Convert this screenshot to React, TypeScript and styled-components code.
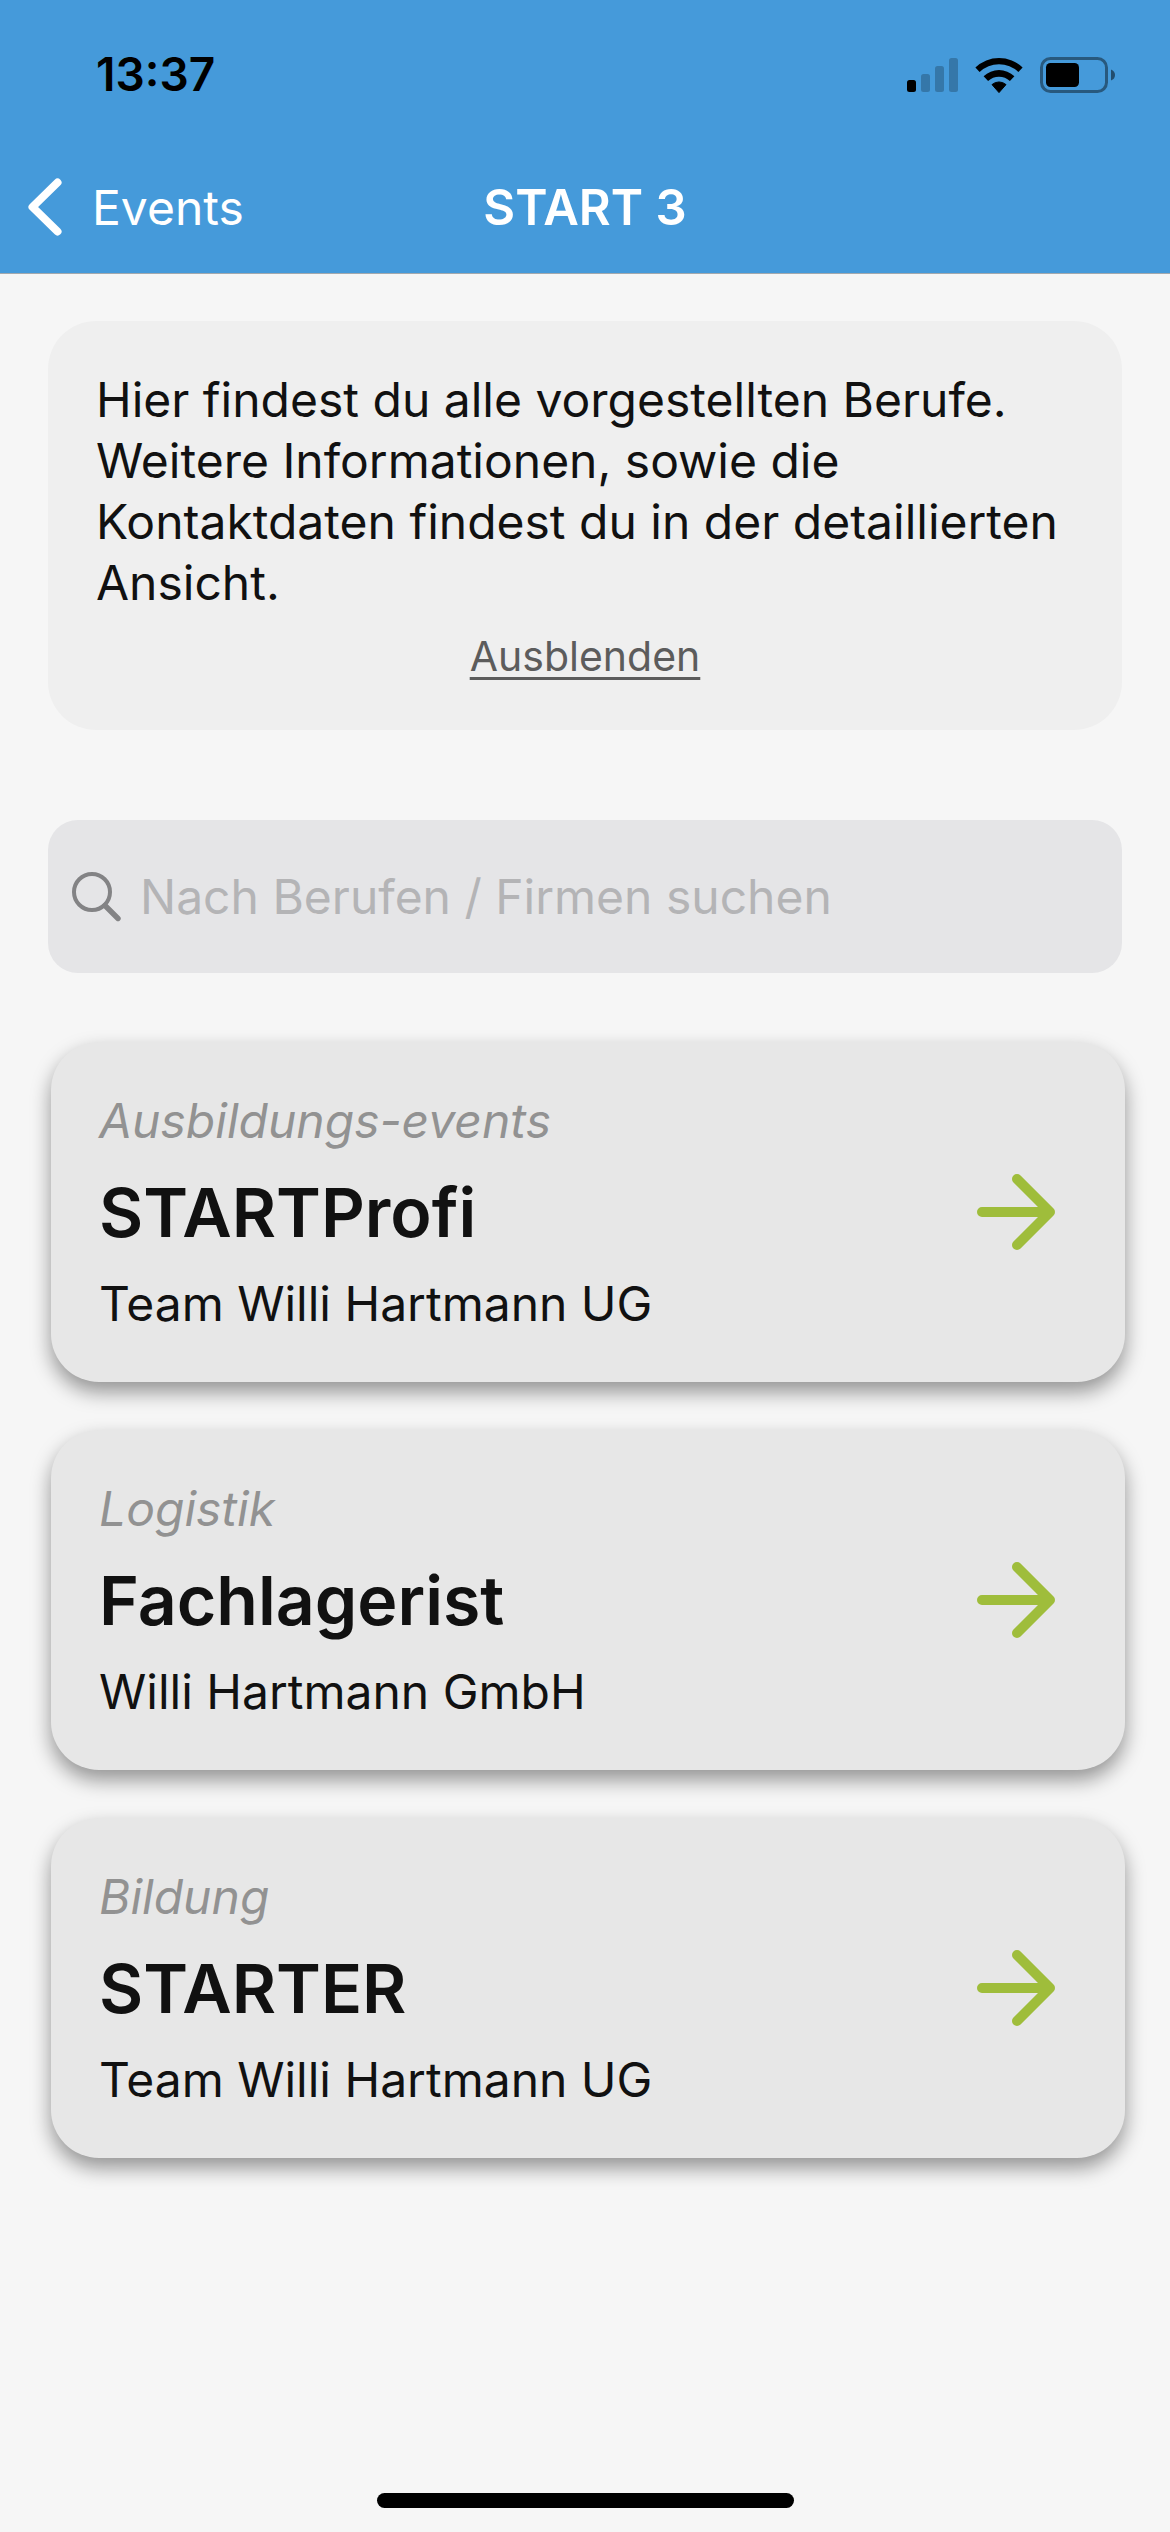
import React, { useState } from "react";
import styled, { createGlobalStyle } from "styled-components";

const color = {
  header: "#459ada",
  page: "#f6f6f6",
  info: "#efefef",
  field: "#e5e5e7",
  card: "#e7e7e7",
  text: "#111111",
  muted: "#929292",
  link: "#5c5c5c",
  accent: "#9fbd3b",
};

const GlobalStyle = createGlobalStyle`
  *, *::before, *::after { box-sizing: border-box; }
  body {
    margin: 0;
    background: ${color.page};
    color: ${color.text};
    font-family: Inter, "Liberation Sans", sans-serif;
    font-size: 48px;
    line-height: 61px;
  }
  button, input { font: inherit; color: inherit; }
`;

const Screen = styled.div`
  display: flex;
  flex-direction: column;
  min-height: 100vh;
`;

const Header = styled.header`
  background: ${color.header};
  border-bottom: 1px solid #a3a9ae;
`;

const StatusBar = styled.div`
  display: flex;
  align-items: center;
  justify-content: space-between;
  height: 141px;
  padding: 8px 54px 0 96px;
`;

const Clock = styled.time`
  color: #000;
  font-size: 46px;
  font-weight: 600;
`;

const StatusIcons = styled.div`
  display: flex;
  align-items: center;
  gap: 17px;
`;

const NavBar = styled.nav`
  display: grid;
  grid-template-columns: 1fr auto 1fr;
  align-items: center;
  height: 132px;
  padding: 0 28px;
  color: #fff;
`;

const BackLink = styled.a`
  display: flex;
  align-items: center;
  justify-self: start;
  gap: 30px;
  color: inherit;
  text-decoration: none;
`;

const NavTitle = styled.h1`
  margin: 0;
  font-size: 49px;
  font-weight: 600;
`;

const Content = styled.main`
  display: flex;
  flex-direction: column;
  padding: 47px 48px;
`;

const InfoBox = styled.section`
  display: flex;
  flex-direction: column;
  align-items: center;
  gap: 18px;
  margin-bottom: 90px;
  padding: 48px;
  border-radius: 48px;
  background: ${color.info};
`;

const InfoText = styled.p`
  align-self: stretch;
  margin: 0;
`;

const HideButton = styled.button`
  padding: 0;
  border: 0;
  background: none;
  color: ${color.link};
  font-size: 41px;
  line-height: 51px;
  text-decoration: underline;
  text-decoration-thickness: 3px;
  text-underline-offset: 6px;
  cursor: pointer;
`;

const SearchField = styled.label`
  display: flex;
  align-items: center;
  gap: 18px;
  height: 153px;
  padding: 0 24px;
  border-radius: 30px;
  background: ${color.field};
`;

const SearchInput = styled.input`
  flex: 1;
  min-width: 0;
  height: 61px;
  padding: 0;
  border: 0;
  outline: 0;
  background: none;
  &::placeholder {
    color: #b4b4b6;
    opacity: 1;
  }
  &::-webkit-search-cancel-button { display: none; }
`;

const JobList = styled.ul`
  display: flex;
  flex-direction: column;
  gap: 48px;
  margin: 69px -3px 0 3px;
  padding: 0;
  list-style: none;
`;

const JobCard = styled.a`
  display: flex;
  align-items: center;
  justify-content: space-between;
  padding: 48px 70px 48px 48px;
  border-radius: 48px;
  background: ${color.card};
  box-shadow: 0 10px 20px rgba(0, 0, 0, 0.4);
  color: inherit;
  text-decoration: none;
`;

const JobText = styled.div`
  display: flex;
  flex-direction: column;
  gap: 18px;
`;

const Category = styled.span`
  color: ${color.muted};
  font-style: italic;
`;

const JobTitle = styled.h2`
  margin: 0;
  font-size: 68px;
  font-weight: 600;
  line-height: 86px;
`;

const HomeArea = styled.footer`
  display: flex;
  justify-content: center;
  margin-top: auto;
  padding-bottom: 24px;
`;

const HomeIndicator = styled.div`
  width: 417px;
  height: 15px;
  border-radius: 8px;
  background: #000;
`;

const SignalIcon = () => (
  <svg width="51" height="36" viewBox="0 0 51 36" aria-hidden="true">
    <rect x="0" y="23" width="9" height="12" rx="2.5" />
    <g opacity="0.22">
      <rect x="14" y="17" width="9" height="18" rx="2.5" />
      <rect x="28" y="9" width="9" height="26" rx="2.5" />
      <rect x="42" y="1" width="9" height="34" rx="2.5" />
    </g>
  </svg>
);

const WifiIcon = () => (
  <svg width="48" height="38" viewBox="0 0 48 38" aria-hidden="true">
    <path d="M0.4 11.6 A34 34 0 0 1 47.6 11.6 L43.4 16 A28 28 0 0 0 4.6 16 Z" />
    <path d="M8.6 20.2 A22.4 22.4 0 0 1 39.4 20.2 L34.9 25 A16 16 0 0 0 13.1 25 Z" />
    <path d="M17 28.6 A10.6 10.6 0 0 1 31 28.6 L24 36.6 Z" strokeWidth="1" stroke="#000" strokeLinejoin="round" />
  </svg>
);

const BatteryIcon = () => (
  <svg width="76" height="36" viewBox="0 0 76 36" aria-hidden="true">
    <rect x="1.5" y="1.5" width="65" height="33" rx="9" fill="none" stroke="#000" strokeOpacity="0.42" strokeWidth="3" />
    <rect x="6" y="6" width="33" height="24" rx="4.5" />
    <path d="M71 12.5 Q75 14 75 18 Q75 22 71 23.5 Z" opacity="0.5" />
  </svg>
);

const BackIcon = () => (
  <svg width="34" height="58" viewBox="0 0 34 58" fill="none" aria-hidden="true">
    <path d="M29.5 4.5 L4.5 29 L29.5 53.5" stroke="currentColor" strokeWidth="8" strokeLinecap="round" strokeLinejoin="round" />
  </svg>
);

const SearchIcon = () => (
  <svg width="50" height="50" viewBox="0 0 50 50" fill="none" stroke="#838385" aria-hidden="true">
    <circle cx="20" cy="20" r="18" strokeWidth="4" />
    <path d="M33 33.5 L46 46.5" strokeWidth="5.4" strokeLinecap="round" />
  </svg>
);

const ArrowIcon = () => (
  <svg width="78" height="76" viewBox="0 0 78 76" fill="none" aria-hidden="true">
    <path
      d="M5 38 H72 M40 5 L73 38 L40 71"
      stroke={color.accent}
      strokeWidth="10"
      strokeLinecap="round"
      strokeLinejoin="round"
    />
  </svg>
);

const jobs = [
  { category: "Ausbildungs-events", title: "STARTProfi", company: "Team Willi Hartmann UG" },
  { category: "Logistik", title: "Fachlagerist", company: "Willi Hartmann GmbH" },
  { category: "Bildung", title: "STARTER", company: "Team Willi Hartmann UG" },
];

export default function App() {
  const [infoVisible, setInfoVisible] = useState(true);
  const [query, setQuery] = useState("");

  const needle = query.trim().toLowerCase();
  const visibleJobs = jobs.filter((job) =>
    `${job.category} ${job.title} ${job.company}`.toLowerCase().includes(needle)
  );

  return (
    <>
      <GlobalStyle />
      <Screen>
        <Header>
          <StatusBar>
            <Clock>13:37</Clock>
            <StatusIcons>
              <SignalIcon />
              <WifiIcon />
              <BatteryIcon />
            </StatusIcons>
          </StatusBar>
          <NavBar>
            <BackLink href="#events">
              <BackIcon />
              Events
            </BackLink>
            <NavTitle>START 3</NavTitle>
          </NavBar>
        </Header>

        <Content>
          {infoVisible && (
            <InfoBox>
              <InfoText>
                Hier findest du alle vorgestellten Berufe. Weitere Informationen, sowie die
                Kontaktdaten findest du in der detaillierten Ansicht.
              </InfoText>
              <HideButton type="button" onClick={() => setInfoVisible(false)}>
                Ausblenden
              </HideButton>
            </InfoBox>
          )}

          <SearchField>
            <SearchIcon />
            <SearchInput
              type="search"
              aria-label="Nach Berufen / Firmen suchen"
              placeholder="Nach Berufen / Firmen suchen"
              value={query}
              onChange={(event) => setQuery(event.target.value)}
            />
          </SearchField>

          <JobList>
            {visibleJobs.map((job) => (
              <li key={job.title}>
                <JobCard href={`#${job.title.toLowerCase()}`}>
                  <JobText>
                    <Category>{job.category}</Category>
                    <JobTitle>{job.title}</JobTitle>
                    <span>{job.company}</span>
                  </JobText>
                  <ArrowIcon />
                </JobCard>
              </li>
            ))}
          </JobList>
        </Content>

        <HomeArea>
          <HomeIndicator />
        </HomeArea>
      </Screen>
    </>
  );
}
